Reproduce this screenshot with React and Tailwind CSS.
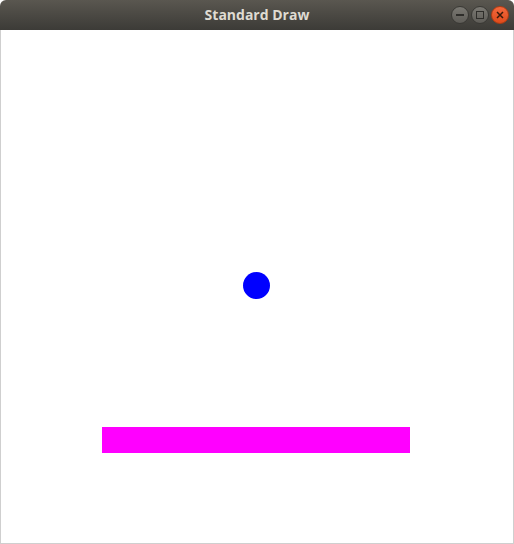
export default function App() {
  return (
    <div className="w-[514px] h-[544px] flex flex-col bg-white overflow-hidden">
      <div className="h-[30px] shrink-0 rounded-t-[6px] bg-gradient-to-b from-[#5a5750] to-[#3c3b37] flex items-center relative">
        <div className="flex-1 text-center text-[14px] font-bold text-[#dfdbd2] font-['Open_Sans',sans-serif] tracking-[0px] pb-[1px]">
          Standard Draw
        </div>
        <div className="absolute right-[5px] top-[6px] flex gap-[2px]">
          <div className="w-[18px] h-[18px] rounded-full bg-gradient-to-b from-[#7a7872] to-[#5e5c57] border border-[#3a3935] flex items-center justify-center">
            <div className="w-[8px] h-[1.5px] bg-[#2e2d2a]" />
          </div>
          <div className="w-[18px] h-[18px] rounded-full bg-gradient-to-b from-[#7a7872] to-[#5e5c57] border border-[#3a3935] flex items-center justify-center">
            <div className="w-[8px] h-[8px] border-[1.5px] border-[#2e2d2a]" />
          </div>
          <div className="w-[18px] h-[18px] rounded-full bg-gradient-to-b from-[#f4683c] to-[#df4b1a] border border-[#b23c12] flex items-center justify-center">
            <svg width="8" height="8" viewBox="0 0 8 8">
              <path d="M1 1L7 7M7 1L1 7" stroke="#3a1a0a" strokeWidth="1.5" />
            </svg>
          </div>
        </div>
      </div>
      <div className="flex-1 border-x border-b border-[#cfcfcf] relative">
        <div className="absolute left-[242px] top-[242px] w-[27px] h-[27px] rounded-full bg-[#0000ff]" />
        <div className="absolute left-[101px] top-[397px] w-[308px] h-[26px] bg-[#ff00ff]" />
      </div>
    </div>
  );
}
